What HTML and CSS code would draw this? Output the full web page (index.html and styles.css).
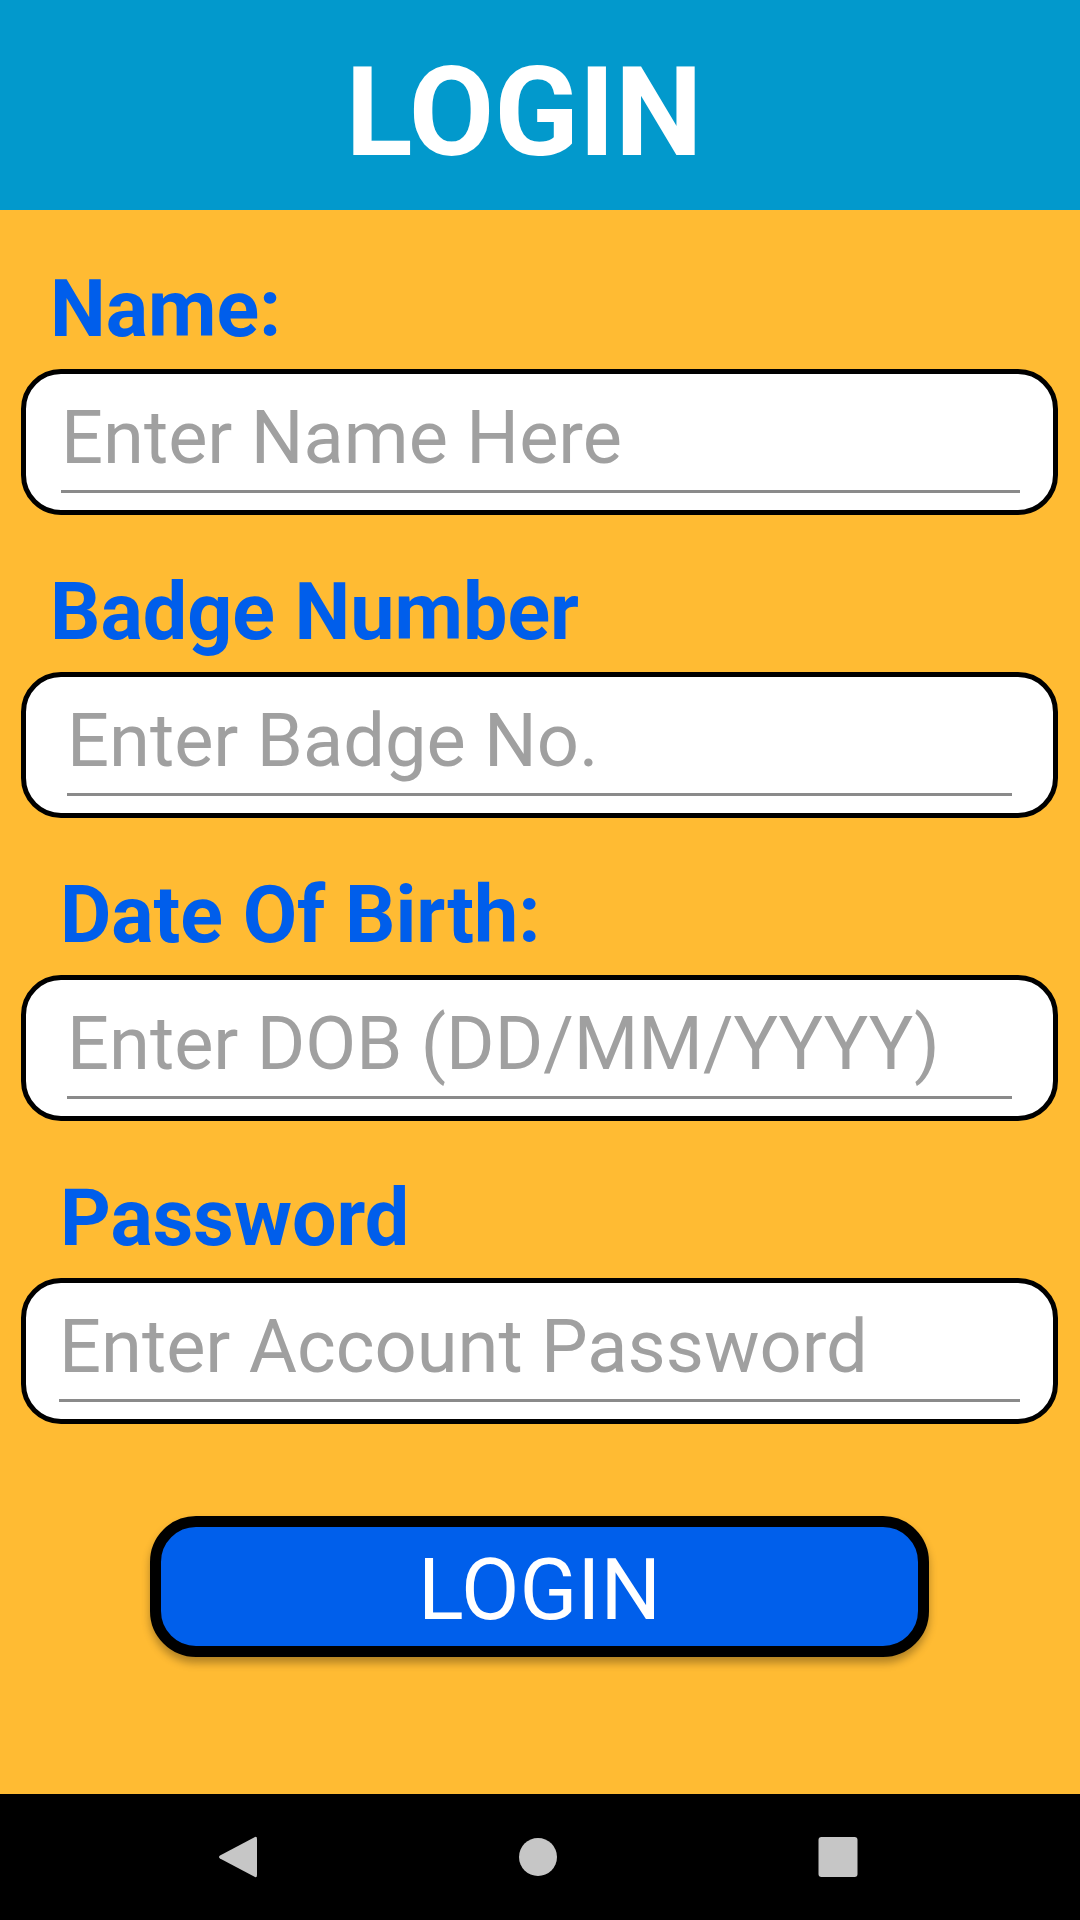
FILE: index.html
```html
<!DOCTYPE html>
<html lang="en">
<head>
<meta charset="utf-8">
<title>Login</title>
<link rel="stylesheet" href="styles.css">
</head>
<body>
<div class="screen">
  <header class="appbar">
    <h1 class="title">LOGIN</h1>
  </header>
  <main class="form">
    <section class="field">
      <div class="label label-a">Name:</div>
      <div class="box box-a"><div class="edit">Enter Name Here</div></div>
    </section>
    <section class="field">
      <div class="label label-a">Badge Number</div>
      <div class="box box-b"><div class="edit">Enter Badge No.</div></div>
    </section>
    <section class="field">
      <div class="label label-b">Date Of Birth:</div>
      <div class="box box-b"><div class="edit">Enter DOB (DD/MM/YYYY)</div></div>
    </section>
    <section class="field">
      <div class="label label-b">Password</div>
      <div class="box box-c"><div class="edit">Enter Account Password</div></div>
    </section>
    <div class="actions">
      <button class="btn" type="button"><span class="btn-text">LOGIN</span></button>
    </div>
  </main>
  <nav class="navbar">
    <span class="nav-slot">
      <svg width="40" height="44" viewBox="0 0 40 44"><path d="M37 2 Q39 1 39 4 L39 40 Q39 43 37 42 L2 23.5 Q0 22 2 20.5 Z" fill="#c6c6c6"/></svg>
    </span>
    <span class="nav-slot">
      <svg width="40" height="40" viewBox="0 0 40 40"><circle cx="20" cy="20" r="19" fill="#c6c6c6"/></svg>
    </span>
    <span class="nav-slot">
      <svg width="40" height="42" viewBox="0 0 40 42"><rect x="0.5" y="1" width="39" height="40" rx="3" fill="#c6c6c6"/></svg>
    </span>
  </nav>
</div>
</body>
</html>
```
FILE: styles.css
```css
html, body {
  margin: 0;
  padding: 0;
}
body {
  width: 1080px;
  height: 1920px;
  overflow: hidden;
  font-family: Roboto, "Liberation Sans", sans-serif;
  background: #ffbb33;
}
.screen {
  display: flex;
  flex-direction: column;
  height: 1920px;
}
.appbar {
  height: 210px;
  box-sizing: border-box;
  background: #0299cc;
  display: flex;
  justify-content: center;
  align-items: flex-start;
  padding-top: 51px;
  padding-right: 32px;
}
.title {
  margin: 0;
  color: #ffffff;
  font-size: 124px;
  line-height: 124px;
  font-weight: 700;
}
.form {
  flex: 1;
  display: flex;
  flex-direction: column;
  padding: 60px 22px 0 21px;
}
.field {
  display: flex;
  flex-direction: column;
  margin-bottom: 58px;
}
.field:last-of-type {
  margin-bottom: 0;
}
.label {
  font-size: 79px;
  line-height: 79px;
  font-weight: 700;
  color: #005eeb;
  margin-bottom: 20px;
}
.label-a { padding-left: 29px; }
.label-b { padding-left: 39px; }
.box {
  height: 146px;
  box-sizing: border-box;
  border: 5px solid #000;
  border-radius: 40px;
  background: #fff;
  padding-top: 27px;
}
.box-a { padding-left: 35px; padding-right: 33px; }
.box-b { padding-left: 41px; padding-right: 41px; }
.box-c { padding-left: 33px; padding-right: 33px; }
.edit {
  font-size: 74px;
  line-height: 74px;
  color: #a0a0a0;
  padding-bottom: 15px;
  border-bottom: 3px solid #8a8a8a;
  white-space: nowrap;
}
.actions {
  display: flex;
  justify-content: center;
  margin-top: 92px;
}
.btn {
  width: 779px;
  height: 141px;
  box-sizing: border-box;
  border: 11px solid #000;
  border-radius: 46px;
  background: #005feb;
  box-shadow: 0 6px 8px rgba(0, 0, 0, 0.3);
  display: flex;
  justify-content: center;
  align-items: center;
  padding: 8px 0 0 0;
  margin: 0;
  font-family: Roboto, "Liberation Sans", sans-serif;
}
.btn-text {
  color: #fff;
  font-size: 85px;
  line-height: 85px;
  font-weight: 400;
}
.navbar {
  height: 126px;
  background: #000;
  display: flex;
  justify-content: center;
  align-items: center;
  gap: 220px;
  padding-right: 4px;
}
.nav-slot {
  width: 80px;
  height: 50px;
  display: flex;
  justify-content: center;
  align-items: center;
}
```
